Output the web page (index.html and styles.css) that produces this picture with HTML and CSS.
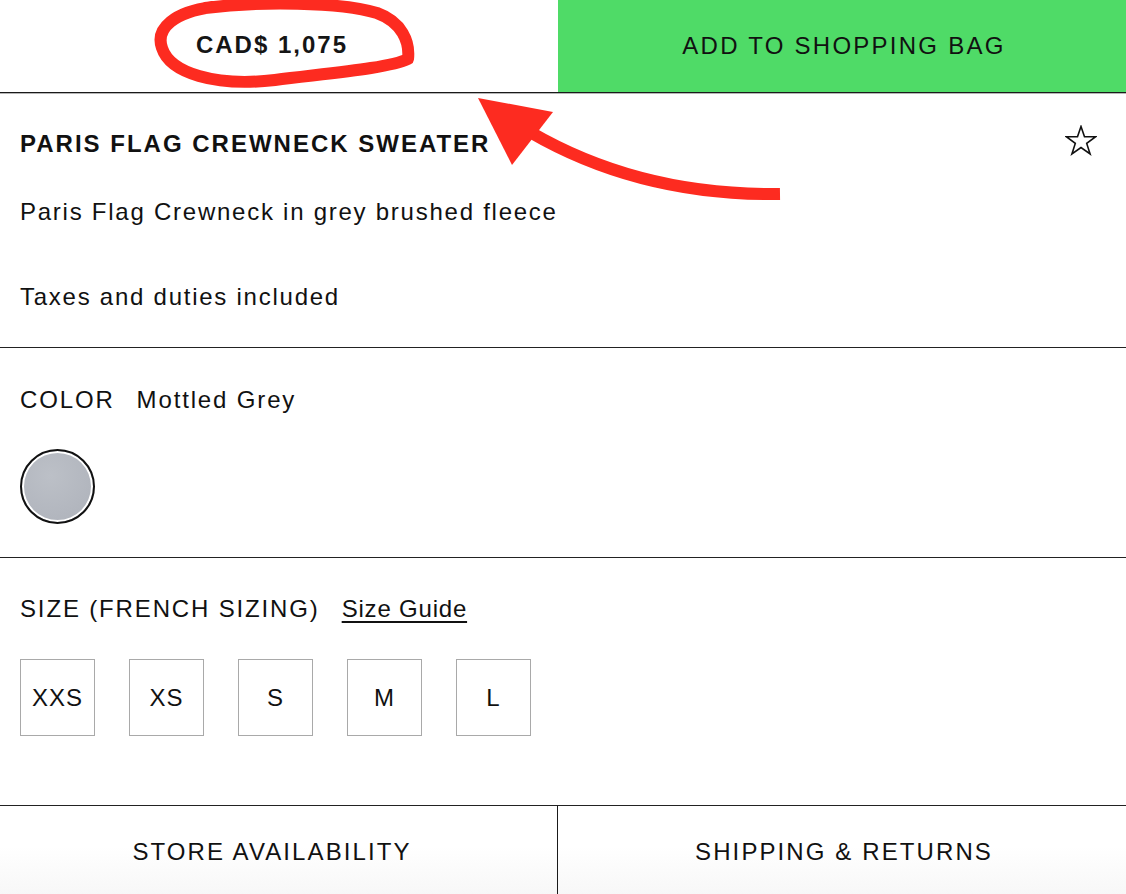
FILE: index.html
```html
<!DOCTYPE html>
<html lang="en">
<head>
<meta charset="utf-8">
<title>Paris Flag Crewneck Sweater</title>
<link rel="stylesheet" href="styles.css">
</head>
<body>
<div class="page">
  <header class="buybar">
    <div class="price">CAD$ 1,075</div>
    <button class="add-btn" type="button">ADD TO SHOPPING BAG</button>
  </header>

  <section class="section info">
    <div class="title-row">
      <h1 class="title">PARIS FLAG CREWNECK SWEATER</h1>
      <svg class="star" viewBox="0 0 32 32" width="32" height="32" aria-hidden="true">
        <polygon points="16,1.5 19.5,11.7 30.7,11.7 21.7,18.4 25.1,29 16,22.5 6.9,29 10.3,18.4 1.3,11.7 12.5,11.7" fill="none" stroke="#111" stroke-width="1.6" stroke-linejoin="miter"/>
      </svg>
    </div>
    <p class="desc">Paris Flag Crewneck in grey brushed fleece</p>
    <p class="desc taxes">Taxes and duties included</p>
  </section>

  <section class="section color">
    <div class="label-row"><span class="label">COLOR</span><span class="value">Mottled Grey</span></div>
    <div class="swatch" title="Mottled Grey"></div>
  </section>

  <section class="section size">
    <div class="label-row"><span class="label">SIZE (FRENCH SIZING)</span><a class="guide" href="#">Size Guide</a></div>
    <div class="sizes">
      <button class="size-box" type="button">XXS</button>
      <button class="size-box" type="button">XS</button>
      <button class="size-box" type="button">S</button>
      <button class="size-box" type="button">M</button>
      <button class="size-box" type="button">L</button>
    </div>
  </section>

  <footer class="tabs">
    <div class="tab tab-store">STORE AVAILABILITY</div>
    <div class="tab tab-ship">SHIPPING &amp; RETURNS</div>
  </footer>

  <svg class="annotation" viewBox="0 0 1126 894" width="1126" height="894" aria-hidden="true">
    <path d="M 205 8 C 260 1, 340 2, 377 13 C 402 22, 410 42, 408 59 C 390 68, 330 73, 275 80 C 215 87, 170 73, 162 48 C 155 28, 175 12, 212 7" fill="none" stroke="#fd2b20" stroke-width="12" stroke-linecap="round" stroke-linejoin="round"/>
    <path d="M 780 194 Q 640 196 530 132" fill="none" stroke="#fd2b20" stroke-width="12"/>
    <polygon points="478,98 553,112 512,165" fill="#fd2b20"/>
  </svg>
</div>
</body>
</html>
```

FILE: styles.css
```css
* { box-sizing: border-box; }

html, body {
  margin: 0;
  padding: 0;
  background: #fff;
}

body {
  font-family: "Liberation Sans", Arial, Helvetica, sans-serif;
  color: #111;
}

.page {
  position: relative;
  width: 1126px;
  height: 894px;
  overflow: hidden;
}

.buybar {
  display: grid;
  grid-template-columns: 558px 1fr;
  height: 93px;
  border-bottom: 1px solid #1a1a1a;
  box-shadow: 0 1px 0 #b5b5b5;
}

.price {
  display: flex;
  align-items: center;
  justify-content: center;
  padding-right: 14px;
  padding-bottom: 2px;
  font-size: 24px;
  font-weight: bold;
  letter-spacing: 2px;
  color: #151515;
}

.add-btn {
  border: 0;
  margin: 0;
  background: #4fdb67;
  font-family: inherit;
  font-size: 24px;
  letter-spacing: 2.25px;
  color: #111;
  padding: 0 0 0 4px;
}

.section {
  padding-left: 20px;
  padding-right: 29px;
  border-bottom: 1px solid #222;
}

.info {
  padding-top: 36px;
  padding-bottom: 35px;
}

.title-row {
  display: flex;
  align-items: center;
  justify-content: space-between;
}

.title {
  margin: 0;
  font-size: 24px;
  line-height: 30px;
  font-weight: bold;
  letter-spacing: 2px;
}

.star {
  display: block;
  margin-top: -7px;
}

.desc {
  margin: 38px 0 0 0;
  font-size: 24px;
  line-height: 30px;
  letter-spacing: 1.75px;
}

.desc.taxes {
  margin-top: 55px;
}

.label-row {
  display: flex;
  align-items: baseline;
  font-size: 24px;
  line-height: 30px;
  letter-spacing: 1.85px;
}

.label {
  margin-right: 22px;
}

.color {
  padding-top: 37px;
  padding-bottom: 33px;
}

.swatch {
  width: 75px;
  height: 75px;
  margin-top: 34px;
  border-radius: 50%;
  border: 2px solid #111;
  background: radial-gradient(circle at 40% 35%, #bcc0c7 0%, #b3b7bf 60%, #adb1b9 100%);
  box-shadow: inset 0 0 0 2px #fff;
}

.size {
  padding-top: 36px;
  padding-bottom: 69px;
}

.guide {
  color: #111;
  letter-spacing: 0.8px;
  text-decoration: underline;
  text-underline-offset: 4px;
  text-decoration-thickness: 1.5px;
}

.sizes {
  display: flex;
  gap: 34px;
  margin-top: 35px;
}

.size-box {
  width: 75px;
  height: 77px;
  margin: 0;
  padding: 0;
  border: 1.5px solid #a9a9a9;
  background: #fff;
  font-family: inherit;
  font-size: 24px;
  letter-spacing: 1px;
  color: #111;
}

.tabs {
  display: grid;
  grid-template-columns: 557px 1fr;
  height: 90px;
  background: linear-gradient(to bottom, #fff 45%, #f7f7f7 100%);
}

.tab {
  display: flex;
  align-items: center;
  justify-content: center;
  padding-top: 2px;
  font-size: 24px;
  letter-spacing: 2.1px;
  color: #111;
}

.tab-store {
  padding-right: 13px;
}

.tab-ship {
  padding-left: 4px;
  border-left: 1.5px solid #1a1a1a;
}

.annotation {
  position: absolute;
  left: 0;
  top: 0;
  pointer-events: none;
}
```
